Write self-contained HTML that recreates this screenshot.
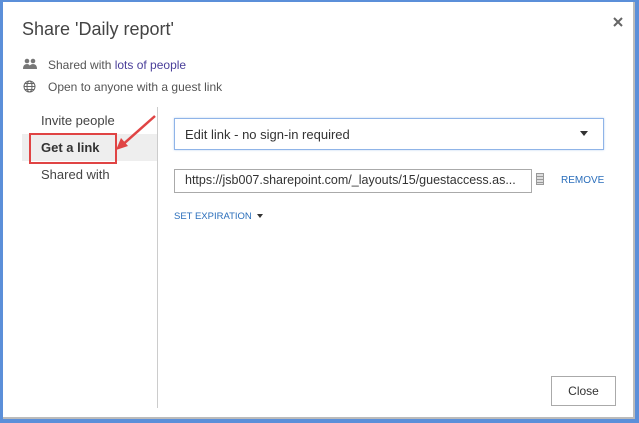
<!DOCTYPE html>
<html><head><style>
body{margin:0;width:639px;height:423px;overflow:hidden;background:#fff;font-family:"Liberation Sans",sans-serif;position:relative}
.a{position:absolute}
</style></head><body>
<div class="a" style="left:0;top:0;width:639px;height:423px;box-sizing:border-box;border-top:2px solid #5b8fd9;border-left:3px solid #5b8fd9;border-right:4px solid #5b8fd9;border-bottom:4px solid #5b8fd9"></div>
<div class="a" style="left:3px;top:417px;width:632px;height:2px;background:#bbb"></div>
<div class="a" style="left:633px;top:2px;width:2px;height:417px;background:#bbb"></div>
<div class="a" style="left:22px;top:19px;font-size:18px;color:#444">Share 'Daily report'</div>
<svg class="a" style="left:613px;top:17px" width="10" height="10"><path d="M1 1L9 9M9 1L1 9" stroke="#666" stroke-width="2"/></svg>
<svg class="a" style="left:23px;top:58px" width="14" height="12"><circle cx="4" cy="3" r="2.3" fill="#777"/><circle cx="10" cy="3" r="2.3" fill="#777"/><path d="M0 11 Q0 6 4 6 Q7 6 7 9 L7 11Z M6 11 Q6 6 10 6 Q14 6 14 11Z" fill="#777"/></svg>
<div class="a" style="left:48px;top:58px;font-size:12px;color:#555">Shared with <span style="color:#4a3f9a">lots of people</span></div>
<svg class="a" style="left:23px;top:80px" width="13" height="13" fill="none" stroke="#666" stroke-width="1"><circle cx="6.5" cy="6.5" r="5.5"/><ellipse cx="6.5" cy="6.5" rx="2.5" ry="5.5"/><path d="M1 6.5H12M2 3.5H11M2 9.5H11"/></svg>
<div class="a" style="left:48px;top:80px;font-size:12px;color:#555">Open to anyone with a guest link</div>
<div class="a" style="left:41px;top:113px;font-size:13px;color:#444">Invite people</div>
<div class="a" style="left:22px;top:134px;width:135px;height:27px;background:#eee"></div>
<div class="a" style="left:29px;top:133px;width:84px;height:27px;border:2px solid #e04444"></div>
<div class="a" style="left:41px;top:140px;font-size:13px;font-weight:bold;color:#333">Get a link</div>
<div class="a" style="left:41px;top:167px;font-size:13px;color:#444">Shared with</div>
<div class="a" style="left:157px;top:107px;width:1px;height:301px;background:#ccc"></div>
<svg class="a" style="left:110px;top:110px" width="50" height="45"><line x1="45" y1="6" x2="10" y2="37" stroke="#e04444" stroke-width="2.5"/><path d="M6 40 L11 28 L18 36Z" fill="#e04444"/></svg>
<div class="a" style="left:174px;top:118px;width:428px;height:30px;border:1px solid #8fb4e8;box-shadow:0 0 2px #b9d0f0"></div>
<div class="a" style="left:185px;top:127px;font-size:13px;color:#333">Edit link - no sign-in required</div>
<div class="a" style="left:580px;top:131px;width:0;height:0;border-left:4px solid transparent;border-right:4px solid transparent;border-top:5px solid #333"></div>
<div class="a" style="left:174px;top:169px;width:356px;height:22px;border:1px solid #aaa"></div>
<div class="a" style="left:185px;top:173px;font-size:12.5px;color:#333;white-space:nowrap">https://jsb007.sharepoint.com/_layouts/15/guestaccess.as...</div>
<div class="a" style="left:536px;top:173px;width:8px;height:12px;border:1px solid #999;box-sizing:border-box;background:repeating-linear-gradient(#ddd 0 2px,#999 2px 3px)"></div>
<div class="a" style="left:561px;top:175px;font-size:10px;color:#2a6ebb">REMOVE</div>
<div class="a" style="left:174px;top:211px;font-size:9.5px;color:#2a6ebb">SET EXPIRATION</div>
<div class="a" style="left:257px;top:214px;width:0;height:0;border-left:3.5px solid transparent;border-right:3.5px solid transparent;border-top:4px solid #333"></div>
<div class="a" style="left:551px;top:376px;width:65px;height:30px;border:1px solid #aaa;box-sizing:border-box"></div>
<div class="a" style="left:551px;top:384px;width:65px;text-align:center;font-size:12px;color:#333">Close</div>
</body></html>
